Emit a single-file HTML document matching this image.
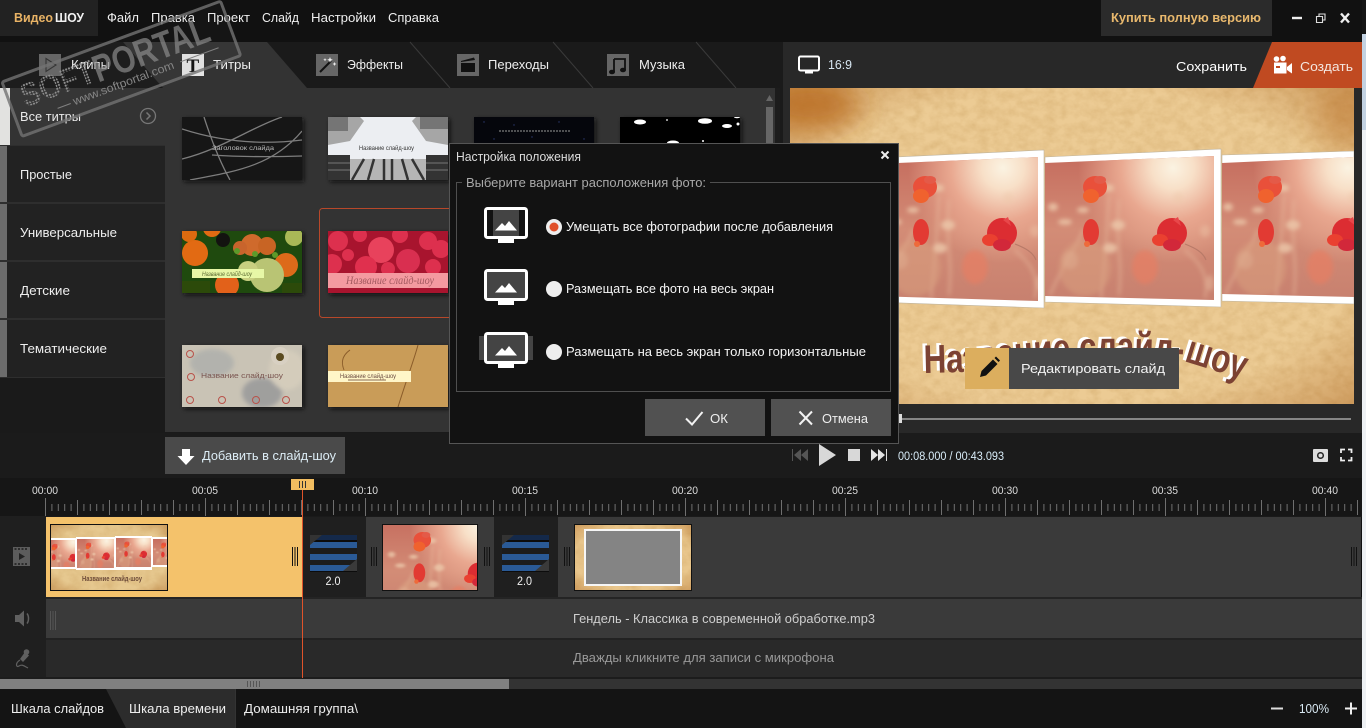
<!DOCTYPE html>
<html><head><meta charset="utf-8"><title>ВидеоШОУ</title>
<style>
html,body{margin:0;padding:0;background:#1a1a1a;width:1366px;height:728px;overflow:hidden}
svg{display:block}
text{font-family:"Liberation Sans","Noto Sans CJK SC",sans-serif;font-size:13px;fill:#eee;white-space:pre}
.t{font-size:11px;fill:#ddd}
.s{font-size:6px}
</style></head><body>
<svg xmlns="http://www.w3.org/2000/svg" width="1366" height="728" viewBox="0 0 1366 728">
<defs>
<filter id="tx" x="0" y="0" width="100%" height="100%"><feTurbulence type="fractalNoise" baseFrequency=".09 .12" numOctaves="4" seed="7"/><feColorMatrix values="0 0 0 0 .6  0 0 0 0 .36  0 0 0 0 .12  .5 .5 0 0 -.37"/></filter>
<filter id="b2"><feGaussianBlur stdDeviation="2"/></filter>
<filter id="b8" x="-100%" y="-100%" width="300%" height="300%"><feGaussianBlur stdDeviation="14"/></filter>
<radialGradient id="vig" cx=".5" cy=".5" r=".72"><stop offset=".7" stop-color="#a8601c" stop-opacity="0"/><stop offset="1" stop-color="#a8601c" stop-opacity=".45"/></radialGradient>
<radialGradient id="sun" gradientUnits="userSpaceOnUse" cx="128" cy="8" r="95"><stop offset="0" stop-color="#fbf3e2"/><stop offset=".22" stop-color="#f8e0c8"/><stop offset=".55" stop-color="#e9a890"/><stop offset="1" stop-color="#e9a890" stop-opacity="0"/></radialGradient>
<linearGradient id="pb" x1="0" y1="0" x2="0" y2="1"><stop offset="0" stop-color="#c46a5c"/><stop offset=".5" stop-color="#d38c76"/><stop offset="1" stop-color="#c67f6e"/></linearGradient>
<pattern id="dots" width="3" height="3" patternUnits="userSpaceOnUse"><circle cx="1.500" cy="1.500" r="1.100" fill="#8f8f8f"/></pattern>
<pattern id="tk" x="45" y="498" width="160" height="18" patternUnits="userSpaceOnUse"><path d="M.5 0V18M32.500 2V17M64.500 2V17M96.500 2V17M128.500 2V17M6.900 6V13M13.300 6V13M19.700 6V13M26.100 6V13M38.900 6V13M45.300 6V13M51.700 6V13M58.100 6V13M70.900 6V13M77.300 6V13M83.700 6V13M90.100 6V13M102.900 6V13M109.300 6V13M115.700 6V13M122.100 6V13M134.900 6V13M141.300 6V13M147.700 6V13M154.100 6V13" stroke="#6f6f6f" fill="none"/></pattern>
<clipPath id="c1"><path d="M874 164L1038 157V301L874 296Z"/></clipPath>
<clipPath id="c2"><path d="M1045 163L1214 156V300L1045 296Z"/></clipPath>
<clipPath id="c3"><path d="M1222 163L1354 157V297L1222 294Z"/></clipPath>
<g id="ph">
<rect x="-10" y="-10" width="200" height="160" fill="url(#pb)"/>
<rect x="-10" y="-10" width="200" height="160" fill="url(#sun)"/>
<g filter="url(#b2)">
<path d="M5 135C20 100 30 90 38 70M56 138C60 100 62 70 64 35M74 135C78 100 70 80 74 40M160 138C165 110 150 100 140 90" stroke="#e8b89a" stroke-width="2.500" fill="none" opacity=".55"/>
<g fill="#edc8aa" opacity=".8"><ellipse cx="8" cy="47" rx="5" ry="4"/><ellipse cx="63" cy="28" rx="6" ry="4"/><ellipse cx="73" cy="65" rx="7" ry="5"/><ellipse cx="65" cy="88" rx="7" ry="5"/><ellipse cx="38" cy="50" rx="6" ry="3"/><ellipse cx="20" cy="62" rx="7" ry="3"/><ellipse cx="133" cy="38" rx="5" ry="6" opacity=".5"/><ellipse cx="160" cy="71" rx="5" ry="6" opacity=".5"/><ellipse cx="165" cy="123" rx="4" ry="8" opacity=".5"/><ellipse cx="25" cy="100" rx="8" ry="9" opacity=".5"/></g>
<ellipse cx="100" cy="107" rx="13" ry="17" fill="#e77d62" opacity=".7"/>
<ellipse cx="40" cy="108" rx="26" ry="28" fill="#d9a080" opacity=".5"/>
</g>
<ellipse cx="50" cy="27" rx="12" ry="11" fill="#e9503a"/><ellipse cx="46" cy="36" rx="8" ry="7" fill="#f0622e"/><ellipse cx="55" cy="20" rx="6" ry="4" fill="#e45a48"/>
<ellipse cx="46" cy="72" rx="8" ry="13" fill="#e23a33"/><ellipse cx="42" cy="84" rx="3" ry="3" fill="#ee6a3a"/>
<circle cx="127" cy="73" r="15" fill="#dc2d32"/><ellipse cx="115" cy="80" rx="8" ry="6" fill="#ea4030"/><ellipse cx="127" cy="85" rx="9" ry="6" fill="#d2283a"/><path d="M128 60L133 57L136 66Z" fill="#e8474a"/>
<path d="M140 84C150 88 158 92 161 100" stroke="#b87a68" stroke-width="1.200" fill="none"/>
</g>
<g id="grip"><path d="M.5 0V19M3 0V19M5.500 0V19" fill="none" stroke-width="1"/></g>
<g id="mtn"><path d="M0 9.500L7 2L10 5L14 0L22 9.500Z" fill="#fff"/></g>
<g id="bl"><rect width="47" height="37" fill="#0c0c0c"/><path d="M0 0H47V5H0Z" fill="#14294a"/><path d="M0 7H47V13H0ZM0 19H47V25H0ZM0 30H47V36H0Z" fill="#2a5a96"/><path d="M0 13H47V19H0ZM0 25H47V30H0Z" fill="#1c1c1c"/><path d="M0 0H12L0 10Z" fill="#333"/><path d="M47 36V24L33 36Z" fill="#3a3a3a"/></g>
</defs>

<!-- base -->
<rect width="1366" height="728" fill="#1a1a1a"/>
<rect x="1362" width="4" height="728" fill="#eef1f4"/>
<rect x="1362" width="4" height="130" fill="#c3d2e2"/>
<rect x="1362" width="4" height="34" fill="#151515"/>

<!-- top bar -->
<rect width="1362" height="42" fill="#111"/>
<rect width="98" height="36" fill="#222"/>
<text x="14" y="22" textLength="39" lengthAdjust="spacingAndGlyphs" style="fill:#e9b365;font-weight:bold">Видео</text>
<text x="55" y="22" textLength="29" lengthAdjust="spacingAndGlyphs" style="font-weight:bold;fill:#f2f2f2">ШОУ</text>
<text x="107" y="22" textLength="32" lengthAdjust="spacingAndGlyphs">Файл</text>
<text x="151" y="22" textLength="44" lengthAdjust="spacingAndGlyphs">Правка</text>
<text x="207" y="22" textLength="43" lengthAdjust="spacingAndGlyphs">Проект</text>
<text x="262" y="22" textLength="37" lengthAdjust="spacingAndGlyphs">Слайд</text>
<text x="311" y="22" textLength="65" lengthAdjust="spacingAndGlyphs">Настройки</text>
<text x="388" y="22" textLength="51" lengthAdjust="spacingAndGlyphs">Справка</text>
<rect x="1101" width="171" height="36" fill="#2b2b2b"/>
<text x="1111" y="22" textLength="150" lengthAdjust="spacingAndGlyphs" style="fill:#e8b86d;font-weight:bold">Купить полную версию</text>
<path d="M1292 18H1302" stroke="#eee" stroke-width="2.400"/>
<path d="M1316.500 16.500H1322.500V22.500H1316.500ZM1319 16V14H1325V20H1323" fill="none" stroke="#ddd" stroke-width="1.100"/>
<path d="M1341 13.500L1349 22.500M1349 13.500L1341 22.500" stroke="#eee" stroke-width="2.400"/>

<!-- tabs -->
<rect y="42" width="780" height="46" fill="#1a1a1a"/>
<path d="M123 42H267L307 88H163Z" fill="#333"/>
<path d="M410 42L450 88M553 42L593 88M696 42L736 88" stroke="#3a3a3a" fill="none"/>
<rect x="39" y="54" width="22" height="22" fill="#666"/>
<path d="M46 58.500L56 65L46 71.500Z" fill="none" stroke="#333" stroke-width="1.100"/>
<rect x="182" y="54" width="22" height="22" fill="#e4e4e4"/>
<text x="186.500" y="72" style="font-family:'Liberation Serif',serif;font-size:19px;fill:#111;font-weight:bold">T</text>
<rect x="316" y="54" width="22" height="22" fill="#666"/>
<path d="M320 72L331 61" stroke="#111" stroke-width="2"/><path d="M330 57l.8 2 2 .8-2 .8-.8 2-.8-2-2-.8 2-.8zM334.500 62l.6 1.400 1.400.6-1.400.6-.6 1.400-.6-1.400-1.400-.6 1.400-.6zM325 58l.5 1.200 1.200.5-1.200.5-.5 1.200-.5-1.200-1.200-.5 1.200-.5z" fill="#eee"/>
<rect x="457" y="54" width="22" height="22" fill="#666"/>
<path d="M461 63H475V72H461Z" fill="#111"/><path d="M461 61L474 57.500L475 60L461 62Z" fill="#111"/>
<rect x="607" y="54" width="22" height="22" fill="#666"/>
<path d="M614 59H625V70M614 59V72" fill="none" stroke="#111" stroke-width="1.800"/><ellipse cx="612" cy="72" rx="3" ry="2.300" fill="#111"/><ellipse cx="623" cy="70" rx="3" ry="2.300" fill="#111"/>
<text x="71" y="69" textLength="39" lengthAdjust="spacingAndGlyphs">Клипы</text>
<text x="213" y="69" textLength="38" lengthAdjust="spacingAndGlyphs">Титры</text>
<text x="347" y="69" textLength="56" lengthAdjust="spacingAndGlyphs">Эффекты</text>
<text x="488" y="69" textLength="61" lengthAdjust="spacingAndGlyphs">Переходы</text>
<text x="639" y="69" textLength="46" lengthAdjust="spacingAndGlyphs">Музыка</text>

<!-- sidebar -->
<rect y="88" width="165" height="344" fill="#1a1a1a"/>
<rect y="145" width="165" height="233" fill="#2e2e2e"/>
<rect y="88" width="165" height="57" fill="#333"/><rect y="88" width="10" height="57" fill="#e2e2e0"/>
<rect y="146" width="165" height="56" fill="#222"/><rect y="146" width="7" height="56" fill="#6c6c6c"/>
<rect y="204" width="165" height="56" fill="#222"/><rect y="204" width="7" height="56" fill="#6c6c6c"/>
<rect y="262" width="165" height="56" fill="#222"/><rect y="262" width="7" height="56" fill="#6c6c6c"/>
<rect y="320" width="165" height="57" fill="#222"/><rect y="320" width="7" height="57" fill="#6c6c6c"/>
<text x="20" y="121" textLength="61" lengthAdjust="spacingAndGlyphs">Все титры</text>
<text x="20" y="179" textLength="52" lengthAdjust="spacingAndGlyphs">Простые</text>
<text x="20" y="237" textLength="97" lengthAdjust="spacingAndGlyphs">Универсальные</text>
<text x="20" y="295" textLength="50" lengthAdjust="spacingAndGlyphs">Детские</text>
<text x="20" y="353" textLength="87" lengthAdjust="spacingAndGlyphs">Тематические</text>
<circle cx="148" cy="116" r="7.500" fill="none" stroke="#777" stroke-width="1.300"/><path d="M146.500 112.500L150 116L146.500 119.500" fill="none" stroke="#777" stroke-width="1.500"/>

<!-- gallery -->
<rect x="165" y="88" width="615" height="344" fill="#333"/>
<rect x="775" y="88" width="5" height="344" fill="#1c1c1c"/>
<path d="M766 101L769.500 95L773 101Z" fill="#666"/><rect x="766" y="107" width="7" height="60" fill="#666"/>
<g filter="url(#b2)" fill="#111" opacity=".85"><rect x="184" y="119" width="120" height="63"/><rect x="330" y="119" width="120" height="63"/><rect x="476" y="119" width="120" height="63"/><rect x="622" y="119" width="120" height="63"/><rect x="184" y="233" width="120" height="62"/><rect x="330" y="233" width="120" height="62"/><rect x="184" y="347" width="120" height="62"/><rect x="330" y="347" width="120" height="62"/></g>
<rect x="319.500" y="208.500" width="160" height="109" rx="3" fill="none" stroke="#b8482a"/>
<!-- t1 -->
<svg x="182" y="117" width="120" height="63" viewBox="0 0 120 63"><rect width="120" height="63" fill="#161616"/>
<path d="M0 42C40 32 70 10 100 0M22 0C30 25 38 45 48 63M0 12C40 25 80 28 120 23M8 63C50 55 90 50 120 14M30 38C60 40 90 40 120 39" stroke="#7d7d7d" stroke-width="1.300" fill="none"/><text x="30" y="33" class="s" textLength="62" lengthAdjust="spacingAndGlyphs" style="fill:#bbb">Заголовок слайда</text></svg>
<!-- t2 -->
<svg x="328" y="117" width="120" height="63" viewBox="0 0 120 63"><rect width="120" height="63" fill="#eceef2"/>
<path d="M0 0H32L36 4L22 24L0 28ZM120 0H88L84 4L98 24L120 28Z" fill="#a6a6a6"/><path d="M0 0H20V14H0ZM92 0H120V12H92Z" fill="#757575"/>
<path d="M0 38H22L22 63H0ZM120 38H98L98 63H120Z" fill="#333"/><path d="M22 42H98V63H22Z" fill="#b5b5b5"/><path d="M36 42L24 63M46 42L40 63M56 42V63M64 42V63M74 42L80 63M84 42L96 63" stroke="#333" stroke-width="2.500"/><path d="M0 46H22M0 53H22M98 46H120M98 53H120" stroke="#777"/>
<text x="31" y="33" class="s" textLength="55" lengthAdjust="spacingAndGlyphs" style="fill:#333">Название слайд-шоу</text></svg>
<!-- t3 -->
<svg x="474" y="117" width="120" height="63" viewBox="0 0 120 63"><rect width="120" height="63" fill="#05060c"/>
<path d="M25 14H97" stroke="#999" stroke-width="1" stroke-dasharray="2 1"/><g fill="#2c3a70"><circle cx="10" cy="5" r=".7"/><circle cx="40" cy="8" r=".7"/><circle cx="58" cy="20" r=".7"/><circle cx="85" cy="5" r=".7"/><circle cx="110" cy="22" r=".7"/><circle cx="20" cy="22" r=".7"/></g></svg>
<!-- t4 -->
<svg x="620" y="117" width="120" height="63" viewBox="0 0 120 63"><rect width="120" height="63" fill="#000"/>
<g fill="#fff"><ellipse cx="20" cy="5" rx="6" ry="2.500"/><ellipse cx="85" cy="4" rx="7" ry="2.800"/><ellipse cx="107" cy="9" rx="5" ry="2"/><ellipse cx="118" cy="7" rx="1.500" ry="1.500"/><ellipse cx="117" cy="0" rx="3" ry="1.200"/><ellipse cx="53" cy="26" rx="6" ry="2.500"/><circle cx="47" cy="3" r=".9"/><circle cx="83" cy="24" r="1"/></g></svg>
<!-- t5 flowers -->
<svg x="182" y="231" width="120" height="62" viewBox="0 0 120 62"><rect width="120" height="62" fill="#1f4a0e"/>
<circle cx="13" cy="22" r="13" fill="#e26a13"/><circle cx="7" cy="3" r="8" fill="#dd6a10"/><circle cx="30" cy="-3" r="9" fill="#e26a13"/><circle cx="45" cy="54" r="12" fill="#e2611a"/><circle cx="41" cy="9" r="7" fill="#131310"/>
<circle cx="70" cy="14" r="11" fill="#cf6a2c"/><circle cx="58" cy="17" r="7" fill="#c8642c"/><circle cx="85" cy="15" r="9" fill="#c86424"/><circle cx="104" cy="34" r="12" fill="#dd6a1a"/><circle cx="85" cy="44" r="17" fill="#b9c474"/><circle cx="66" cy="40" r="10" fill="#c8cf80"/><circle cx="112" cy="6" r="9" fill="#a9b857"/>
<circle cx="55" cy="20" r="3" fill="#5c9a2a"/><circle cx="73" cy="23" r="3" fill="#5c9a2a"/><circle cx="93" cy="24" r="3" fill="#5c9a2a"/>
<path d="M0 50H28V62H0ZM100 52H120V62H100Z" fill="#2c4a0a"/><rect x="10" y="38" width="72" height="9" fill="#e7f7a6"/><text x="20" y="45" class="s" textLength="50" lengthAdjust="spacingAndGlyphs" style="fill:#5a6a30;font-style:italic">Название слайд-шоу</text></svg>
<!-- t6 raspberries -->
<svg x="328" y="231" width="120" height="62" viewBox="0 0 120 62"><rect width="120" height="62" fill="#a8142e"/>
<g fill="#dd304e"><circle cx="10" cy="10" r="10"/><circle cx="53" cy="19" r="13" fill="#e8425c"/><circle cx="80" cy="30" r="12" fill="#d92f50"/><circle cx="100" cy="10" r="9"/><circle cx="32" cy="4" r="7"/><circle cx="4" cy="33" r="10"/><circle cx="38" cy="36" r="11" fill="#e0304e"/><circle cx="113" cy="18" r="9"/><circle cx="105" cy="36" r="8"/><circle cx="20" cy="24" r="6"/><circle cx="72" cy="4" r="8"/><circle cx="60" cy="38" r="7"/></g>
<rect y="42" width="120" height="15" fill="#f49aa0"/><text x="18" y="53" textLength="88" lengthAdjust="spacingAndGlyphs" style="font-family:'Liberation Serif',serif;font-size:12px;font-style:italic;fill:#a45a60">Название слайд-шоу</text></svg>
<!-- t7 stone -->
<svg x="182" y="345" width="120" height="62" viewBox="0 0 120 62"><rect width="120" height="62" fill="#c9c3b5"/>
<ellipse cx="30" cy="18" rx="22" ry="14" fill="#a9acaa" opacity=".7" filter="url(#b2)"/><ellipse cx="80" cy="48" rx="20" ry="15" fill="#8e9094" opacity=".7" filter="url(#b2)"/><ellipse cx="105" cy="25" rx="18" ry="20" fill="#d7cfbd" opacity=".8" filter="url(#b2)"/><circle cx="98" cy="11" r="9" fill="#d8d0c2"/><circle cx="98" cy="12" r="4" fill="#5a4a20"/>
<g fill="none" stroke="#b9524a" stroke-width="1"><circle cx="8" cy="9" r="3.500"/><circle cx="9" cy="32" r="3.500"/><circle cx="8" cy="55" r="3.500"/><circle cx="40" cy="55" r="3.500"/><circle cx="74" cy="55" r="3.500"/><circle cx="104" cy="55" r="3.500"/></g>
<text x="19" y="33" class="s" textLength="82" lengthAdjust="spacingAndGlyphs" style="font-size:7.500px;fill:#7a5550">Название слайд-шоу</text></svg>
<!-- t8 sand -->
<svg x="328" y="345" width="120" height="62" viewBox="0 0 120 62"><rect width="120" height="62" fill="#c99c58"/>
<path d="M22 5C12 12 14 20 16 25M90 0C86 15 80 30 70 62" stroke="#8a5c2a" fill="none"/><rect y="26" width="83" height="11" fill="#fff6c8"/><text x="12" y="33" class="s" textLength="56" lengthAdjust="spacingAndGlyphs" style="fill:#6a4a40">Название слайд-шоу</text><path d="M20 35H58" stroke="#8a6a55" stroke-width="1"/></svg>

<!-- preview panel -->
<rect x="780" y="42" width="3" height="391" fill="#1a1a1a"/>
<rect x="783" y="42" width="579" height="391" fill="#282828"/>
<path d="M1272 42H1362V88H1253Z" fill="#c04a21"/>
<rect x="799" y="56.500" width="20" height="14" rx="1.500" fill="none" stroke="#fff" stroke-width="2"/><rect x="805" y="71" width="8" height="2.500" fill="#fff"/>
<text x="828" y="69" textLength="24" lengthAdjust="spacingAndGlyphs" style="fill:#d7e6f2">16:9</text>
<text x="1176" y="71" textLength="71" lengthAdjust="spacingAndGlyphs" style="fill:#fff">Сохранить</text>
<text x="1300" y="71" textLength="53" lengthAdjust="spacingAndGlyphs" style="fill:#f4e6df">Создать</text>
<g fill="#fff"><circle cx="1276.500" cy="59" r="2.800"/><circle cx="1283" cy="58.500" r="2.800"/><rect x="1274" y="62.500" width="12.500" height="11"/><path d="M1287 67L1292 63V73.500L1287 70Z"/></g><rect x="1276" y="66" width="4" height="2" fill="#c04a21"/>

<!-- preview image -->
<svg x="790" y="88" width="564" height="316" viewBox="790 88 564 316">
<rect x="790" y="88" width="564" height="316" fill="#eccb94"/>
<rect x="790" y="88" width="564" height="316" filter="url(#tx)"/>
<rect x="790" y="88" width="564" height="316" fill="url(#vig)"/>
<ellipse cx="810" cy="105" rx="50" ry="26" fill="#b8691f" opacity=".8" filter="url(#b8)"/>
<ellipse cx="1345" cy="115" rx="30" ry="32" fill="#b8691f" opacity=".35" filter="url(#b8)"/>
<!-- frames -->
<path d="M1222 155L1354 151V304L1222 301Z" fill="#fff" stroke="#bfb49e" stroke-width=".6"/>
<g clip-path="url(#c3)"><use href="#ph" x="1220" y="160"/></g>
<path d="M1045 157L1221 149V307L1045 302Z" fill="#fff" stroke="#bfb49e" stroke-width=".6"/>
<g clip-path="url(#c2)"><use href="#ph" x="1045" y="160"/></g>
<path d="M874 158L1044 150V308L874 302Z" fill="#fff" stroke="#bfb49e" stroke-width=".6"/>
<g clip-path="url(#c1)"><use href="#ph" x="875" y="160"/></g>
<!-- title -->
<path id="arc" d="M924 373L965 372Q1085 354 1190 363L1248 381" fill="none"/>
<text style="font-size:40px;fill:#fff;font-weight:bold" transform="translate(-3,-2)"><textPath href="#arc" textLength="322" lengthAdjust="spacingAndGlyphs">Название слайд-шоу</textPath></text>
<text style="font-size:40px;fill:#7c4233;font-weight:bold"><textPath href="#arc" textLength="322" lengthAdjust="spacingAndGlyphs">Название слайд-шоу</textPath></text>
</svg>
<!-- edit button -->
<rect x="965" y="348" width="44" height="41" fill="#dcae5e"/>
<rect x="1009" y="348" width="170" height="41" fill="#484848"/>
<path d="M980 377L981.500 371L993 359.500L997.500 364L986 375.500ZM994.500 358L996 356.500L1000 360.500L998.500 362Z" fill="#111"/>
<text x="1021" y="373" textLength="144" lengthAdjust="spacingAndGlyphs" style="fill:#f2f2f2">Редактировать слайд</text>

<!-- slider -->
<rect x="900" y="418" width="451" height="2" fill="#858585"/><rect x="899" y="414" width="3" height="9" fill="#ddd"/>

<!-- playback row -->
<rect x="0" y="433" width="1362" height="45" fill="#1b1b1b"/>
<rect x="165" y="437" width="180" height="37" fill="#4a4a4a"/>
<path d="M182 449H190V456H194.500L186 465L177.500 456H182Z" fill="#fff"/>
<text x="202" y="460" textLength="134" lengthAdjust="spacingAndGlyphs" style="fill:#dcecf5">Добавить в слайд-шоу</text>
<path d="M792.500 449V461" stroke="#555"/><path d="M808 449V461L801 455ZM801 449V461L794 455Z" fill="#555"/>
<path d="M819 444V466L836 455Z" fill="#d8d8d8"/>
<rect x="848" y="449" width="12" height="12" fill="#d8d8d8"/>
<path d="M871 449V461L878 455ZM878 449V461L885 455Z" fill="#e4e4e4"/><path d="M886.500 449V461" stroke="#ddd"/>
<text x="898" y="460" textLength="106" lengthAdjust="spacingAndGlyphs" style="font-size:11.500px;fill:#d8ecf8">00:08.000 / 00:43.093</text>
<rect x="1313" y="449" width="15" height="13" rx="1" fill="#ddd"/><circle cx="1320.500" cy="455.500" r="2.800" fill="none" stroke="#222" stroke-width="1.500"/>
<path d="M1341 453V449.500H1345M1348 449.500H1351.500V453M1351.500 457V460.500H1348M1345 460.500H1341V457" fill="none" stroke="#eee" stroke-width="1.800"/>

<!-- dialog -->
<rect x="449.500" y="143.500" width="449" height="300" fill="#121212" stroke="#555"/>
<text x="456" y="161" textLength="125" lengthAdjust="spacingAndGlyphs" style="font-size:12.500px;fill:#ddd">Настройка положения</text>
<path d="M881.500 151.500L888.500 158.500M888.500 151.500L881.500 158.500" stroke="#eee" stroke-width="2"/>
<rect x="456.500" y="182.500" width="434" height="209" fill="none" stroke="#4f4f4f"/>
<rect x="462" y="178" width="248" height="9" fill="#121212"/>
<text x="466" y="187" textLength="240" lengthAdjust="spacingAndGlyphs" style="fill:#a9a9a9">Выберите вариант расположения фото:</text>
<!-- icon1 -->
<rect x="493" y="210" width="26" height="26" fill="#444"/>
<rect x="485.500" y="208.500" width="41" height="29" rx="2" fill="none" stroke="#fff" stroke-width="3"/><rect x="498" y="239" width="16" height="4" fill="#fff"/><use href="#mtn" x="495" y="221"/>
<!-- icon2 -->
<rect x="485.500" y="270.500" width="41" height="29" rx="2" fill="#444" stroke="#fff" stroke-width="3"/><rect x="498" y="301" width="16" height="4" fill="#fff"/><use href="#mtn" x="495" y="283"/>
<!-- icon3 -->
<rect x="479" y="336" width="54" height="24" fill="#444"/>
<rect x="485.500" y="333.500" width="41" height="29" rx="2" fill="#444" stroke="#fff" stroke-width="3"/><rect x="498" y="364" width="16" height="4" fill="#fff"/><use href="#mtn" x="495" y="346"/>
<!-- radios -->
<circle cx="554" cy="227" r="8" fill="#eee"/><circle cx="554" cy="227" r="4.500" fill="#e0502a"/>
<circle cx="554" cy="289" r="8" fill="#eee"/><circle cx="554" cy="352" r="8" fill="#eee"/>
<text x="566" y="231" textLength="267" lengthAdjust="spacingAndGlyphs" style="fill:#f5f5f5">Умещать все фотографии после добавления</text>
<text x="566" y="293" textLength="208" lengthAdjust="spacingAndGlyphs" style="fill:#f5f5f5">Размещать все фото на весь экран</text>
<text x="566" y="356" textLength="300" lengthAdjust="spacingAndGlyphs" style="fill:#f5f5f5">Размещать на весь экран только горизонтальные</text>
<rect x="645" y="399" width="120" height="37" fill="#515151"/>
<rect x="771" y="399" width="120" height="37" fill="#515151"/>
<path d="M686 418.500L692 424.500L702.500 412" fill="none" stroke="#f2f2f2" stroke-width="2"/>
<path d="M799.500 411.500L812 424.500M812 411.500L799.500 424.500" stroke="#f2f2f2" stroke-width="2"/>
<text x="710" y="423" textLength="18" lengthAdjust="spacingAndGlyphs" style="fill:#eee">ОК</text>
<text x="822" y="423" textLength="46" lengthAdjust="spacingAndGlyphs" style="fill:#eee">Отмена</text>

<!-- ruler -->
<rect y="478" width="1362" height="38" fill="#161616"/>
<rect x="45" y="498" width="1317" height="18" fill="url(#tk)"/>
<text class="t" x="32" y="494" textLength="26" lengthAdjust="spacingAndGlyphs">00:00</text><text class="t" x="192" y="494" textLength="26" lengthAdjust="spacingAndGlyphs">00:05</text><text class="t" x="352" y="494" textLength="26" lengthAdjust="spacingAndGlyphs">00:10</text><text class="t" x="512" y="494" textLength="26" lengthAdjust="spacingAndGlyphs">00:15</text><text class="t" x="672" y="494" textLength="26" lengthAdjust="spacingAndGlyphs">00:20</text><text class="t" x="832" y="494" textLength="26" lengthAdjust="spacingAndGlyphs">00:25</text><text class="t" x="992" y="494" textLength="26" lengthAdjust="spacingAndGlyphs">00:30</text><text class="t" x="1152" y="494" textLength="26" lengthAdjust="spacingAndGlyphs">00:35</text><text class="t" x="1312" y="494" textLength="26" lengthAdjust="spacingAndGlyphs">00:40</text>

<!-- tracks -->
<rect y="516" width="46" height="163" fill="#1f1f1f"/>
<rect x="46" y="517" width="1316" height="80" fill="#3a3a3a"/>
<rect x="46" y="597" width="1316" height="2" fill="#242424"/>
<rect x="46" y="599" width="1316" height="39" fill="#3a3a3a"/>
<rect x="46" y="638" width="1316" height="2" fill="#222"/>
<rect x="46" y="640" width="1316" height="37" fill="#292929"/>
<rect x="0" y="677" width="1362" height="2" fill="#1c1c1c"/>
<rect x="46" y="517" width="256" height="80" fill="#f4c26b"/>
<rect x="303" y="517" width="63" height="80" fill="#1f1f1f"/>
<rect x="494" y="517" width="64" height="80" fill="#1f1f1f"/>
<rect x="1361" y="517" width="1" height="80" fill="#111"/>
<!-- clip 1 -->
<svg x="50" y="524" width="118" height="67" viewBox="0 0 118 67"><rect width="118" height="67" fill="#e6c88f"/><rect width="118" height="67" filter="url(#tx)"/><rect width="118" height="67" fill="url(#vig)"/>
<rect x="-1" y="14" width="27" height="31" fill="#fff"/><rect x="26" y="13" width="39" height="33" fill="#fff"/><rect x="65" y="12" width="37" height="34" fill="#fff"/><rect x="102" y="13" width="16" height="30" fill="#fff"/>
<svg x="0" y="16" width="25" height="27" viewBox="30 0 105 113"><use href="#ph"/></svg>
<svg x="27" y="15" width="37" height="29" viewBox="0 0 160 125"><use href="#ph"/></svg>
<svg x="66" y="14" width="35" height="29" viewBox="0 0 160 132"><use href="#ph"/></svg>
<svg x="103" y="15" width="15" height="26" viewBox="0 0 70 120"><use href="#ph"/></svg>
<text x="32" y="57" textLength="60" lengthAdjust="spacingAndGlyphs" style="font-size:7px;fill:#6c4a38;font-weight:bold">Название слайд-шоу</text></svg>
<rect x="50.500" y="524.500" width="117" height="66" fill="none" stroke="#111"/>
<use href="#grip" x="292" y="547" stroke="#111"/>
<!-- trans -->
<use href="#bl" x="310" y="535"/><use href="#bl" x="502" y="535"/>
<text x="325.500" y="585" textLength="15" lengthAdjust="spacingAndGlyphs" style="font-size:12px;fill:#f2f2f2">2.0</text>
<text x="517" y="585" textLength="15" lengthAdjust="spacingAndGlyphs" style="font-size:12px;fill:#f2f2f2">2.0</text>
<!-- clip2 -->
<svg x="382" y="524" width="96" height="67" viewBox="-5 5 131 92" preserveAspectRatio="none"><use href="#ph"/></svg>
<rect x="382.500" y="524.500" width="95" height="66" fill="none" stroke="#111"/>
<!-- clip3 -->
<svg x="574" y="524" width="118" height="67" viewBox="0 0 118 67"><rect width="118" height="67" fill="#e9c68c"/><rect width="118" height="67" filter="url(#tx)"/><rect width="118" height="67" fill="url(#vig)"/></svg>
<rect x="574.500" y="524.500" width="117" height="66" fill="none" stroke="#111"/>
<rect x="585" y="530" width="96" height="55" fill="#848484" stroke="#f6f6f6" stroke-width="2"/>
<use href="#grip" x="371" y="547" stroke="#111"/><use href="#grip" x="484" y="547" stroke="#111"/><use href="#grip" x="564" y="547" stroke="#111"/><use href="#grip" x="1351" y="547" stroke="#111"/>
<use href="#grip" x="50" y="611" stroke="#555"/>
<!-- track icons -->
<rect x="13" y="547" width="17" height="19" fill="#5c5c5c"/><path d="M14.500 549H28.500M14.500 564H28.500" stroke="#2c2c2c" stroke-width="2" stroke-dasharray="2 1.500"/><path d="M19 553V560L25 556.500Z" fill="#222"/>
<path d="M15 615H19L24 610.500V626.500L19 622H15Z" fill="#606060"/><path d="M27 613.500C29 616 29 621 27 623.500" stroke="#606060" stroke-width="1.500" fill="none"/>
<path d="M25 652L29 655.500L23 662L20 659Z" fill="#606060"/><circle cx="26.500" cy="652" r="2.800" fill="#606060"/><path d="M20 660C15 663 16 668 19 666C22 664 24 666 28 668" stroke="#606060" stroke-width="1.200" fill="none"/>
<text x="573" y="623" textLength="302" lengthAdjust="spacingAndGlyphs" style="fill:#cfcfcf">Гендель - Классика в современной обработке.mp3</text>
<text x="573" y="662" textLength="261" lengthAdjust="spacingAndGlyphs" style="fill:#999">Дважды кликните для записи с микрофона</text>
<!-- playhead -->
<rect x="291" y="479" width="23" height="11" fill="#f2bd60"/><path d="M299.500 481V488M302.500 481V488M305.500 481V488" stroke="#333"/>
<rect x="302" y="490" width="1" height="188" fill="#e0532a"/>

<!-- scrollbar -->
<rect y="679" width="1362" height="10" fill="#333"/>
<rect y="679" width="509" height="10" fill="#808080"/>
<path d="M247.500 681V687M250.500 681V687M253.500 681V687M256.500 681V687M259.500 681V687" stroke="#555"/>

<!-- bottom -->
<rect y="689" width="1362" height="39" fill="#141414"/>
<path d="M106 689H235V728H126Z" fill="#2c2c2c"/>
<rect x="235" y="689" width="1" height="39" fill="#333"/>
<text x="11" y="713" textLength="93" lengthAdjust="spacingAndGlyphs">Шкала слайдов</text>
<text x="129" y="713" textLength="97" lengthAdjust="spacingAndGlyphs">Шкала времени</text>
<text x="244" y="713" textLength="114" lengthAdjust="spacingAndGlyphs">Домашняя группа\</text>
<path d="M1271 708.500H1283" stroke="#ddd" stroke-width="2"/>
<text x="1299" y="713" textLength="30" lengthAdjust="spacingAndGlyphs" style="fill:#d8e8f2">100%</text>
<path d="M1345 708.500H1357M1351 702.500V714.500" stroke="#eee" stroke-width="2"/>

<!-- watermark -->
<g transform="translate(2 82) rotate(-20.300)">
<rect x="0" y="0" width="233" height="58" rx="2" fill="rgba(120,120,120,.04)" stroke="#737373" stroke-opacity=".8" stroke-width="3"/>
<text x="13" y="32" textLength="77" lengthAdjust="spacingAndGlyphs" style="font-size:33px;font-weight:bold;fill:url(#dots)">SOFT</text>
<text x="90" y="34" textLength="122" lengthAdjust="spacingAndGlyphs" style="font-size:38px;font-weight:bold;fill:#8a8a8a;fill-opacity:.7">PORTAL</text>
<text x="60" y="47" textLength="107" lengthAdjust="spacingAndGlyphs" style="font-size:11.500px;fill:#868686">www.softportal.com</text>
<path d="M43 44H57M174 43H215" stroke="#808080"/>
</g>
</svg>
</body></html>
